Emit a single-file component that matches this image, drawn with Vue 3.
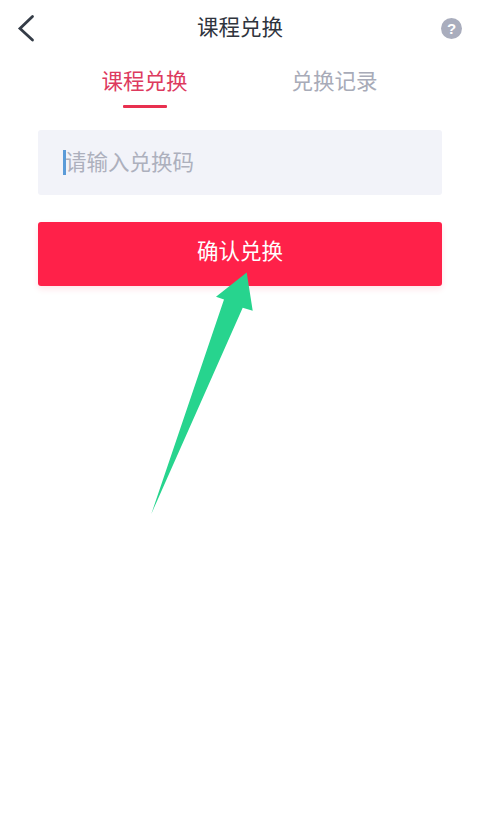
<script setup>
const tabs = [
  { label: '课程兑换', active: true },
  { label: '兑换记录', active: false },
]
</script>

<template>
  <div class="page">
    <header class="nav">
      <svg class="back" width="18" height="28" viewBox="0 0 18 28" fill="none">
        <path d="M15.5 2.5 3 14.5 15.5 26" stroke="#343c47" stroke-width="2.8" stroke-linecap="round" stroke-linejoin="miter" />
      </svg>
      <h1 class="title">课程兑换</h1>
      <span class="help">?</span>
    </header>

    <nav class="tabs">
      <div v-for="tab in tabs" :key="tab.label" class="tab" :class="{ active: tab.active }">
        <span class="tab-label">{{ tab.label }}</span>
        <i v-if="tab.active" class="line"></i>
      </div>
    </nav>

    <section class="form">
      <div class="input">
        <i class="caret"></i>
        <span class="placeholder">请输入兑换码</span>
      </div>
      <button class="submit" type="button">确认兑换</button>
    </section>

    <svg class="arrow" width="479" height="813" viewBox="0 0 479 813">
      <path d="M246.7 272.5 216 296.7 224 299.5 151.3 514 242.7 307.7 252.7 310.7Z" fill="#27d48e" />
    </svg>
  </div>
</template>

<style>
html, body { margin: 0; background: #fff; }
</style>

<style scoped>
.page {
  position: relative;
  width: 479px;
  height: 813px;
  overflow: hidden;
  background: #fff;
  font-family: "Noto Sans CJK SC", "Noto Sans", sans-serif;
}
.nav {
  display: flex;
  align-items: center;
  justify-content: space-between;
  height: 54px;
  padding: 0 17px 0 17px;
  box-sizing: border-box;
}
.back { flex: none; margin-top: 1px; }
.title {
  margin: 0 0 2px 4px;
  font-size: 21.5px;
  font-weight: 400;
  line-height: 52px;
  color: #2f343d;
}
.help {
  width: 21px;
  height: 21px;
  margin-top: 2px;
  border-radius: 50%;
  background: #a9adbd;
  color: #fff;
  font: 700 15px/21px "Liberation Sans", sans-serif;
  text-align: center;
}
.tabs {
  display: grid;
  grid-template-columns: 190px 190px;
  justify-content: center;
  height: 76px;
}
.tab {
  display: flex;
  flex-direction: column;
  align-items: center;
  height: 54px;
  color: #a8abb8;
  font-size: 21.5px;
}
.tab-label { height: 51px; line-height: 52px; }
.tab.active { color: #dd3a5e; }
.line {
  width: 44px;
  height: 3px;
  border-radius: 1px;
  background: #e8304f;
}
.form {
  display: flex;
  flex-direction: column;
  gap: 27px;
  padding: 0 37px 0 38px;
}
.input {
  display: flex;
  align-items: center;
  height: 65px;
  padding-left: 25px;
  border-radius: 3px;
  background: #f2f3f9;
}
.caret {
  flex: none;
  width: 3px;
  height: 25px;
  background: #5b9bd8;
}
.placeholder {
  margin: 0 0 4px -1px;
  font-size: 21.5px;
  color: #adb0bd;
}
.submit {
  height: 64px;
  padding: 0 0 10px;
  border: 0;
  border-radius: 3px;
  background: #ff2149;
  box-shadow: 0 3px 6px rgba(255, 33, 73, 0.12);
  color: #fff;
  font: inherit;
  font-size: 21.5px;
}
.arrow {
  position: absolute;
  top: 0;
  left: 0;
  pointer-events: none;
}
</style>
